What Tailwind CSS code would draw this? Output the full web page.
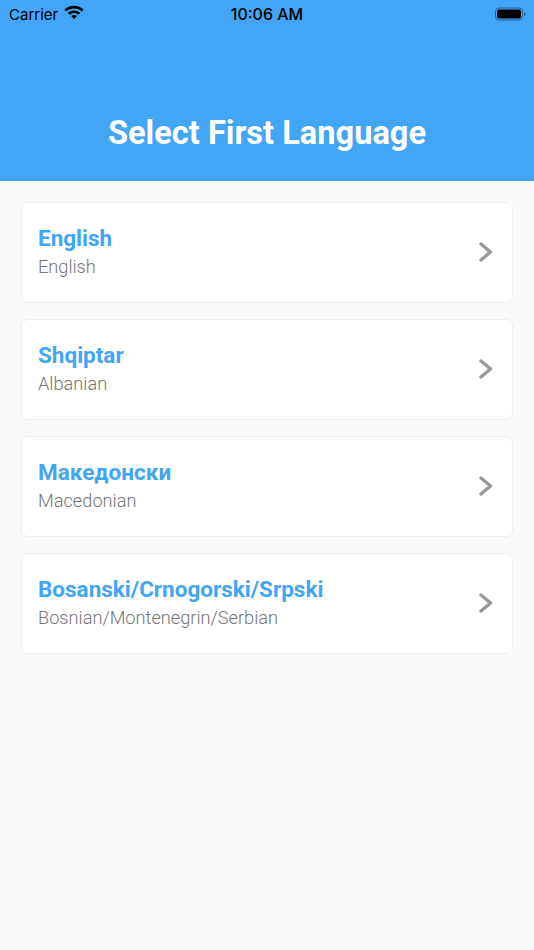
<!DOCTYPE html>
<html lang="en">

<head>
    <meta charset="UTF-8">
    <meta name="viewport" content="width=device-width, initial-scale=1.0">
    <title>Select First Language</title>
    <script src="https://cdn.jsdelivr.net/npm/@tailwindcss/browser@4"></script>
</head>

<body class="bg-[#fafafa] min-h-screen font-['Roboto',sans-serif]">

    <!-- Header -->
    <div class="bg-[#42a5f5] h-[181px] flex flex-col">
        <!-- Status bar -->
        <div class="h-[28px] pl-[9px] pr-[8px] flex items-center justify-between relative font-['Inter',sans-serif] text-black">
            <div class="flex items-center gap-[6px]">
                <span class="text-[15px] leading-none">Carrier</span>
                <svg class="w-[20px] h-[15px] -mt-[3px]" viewBox="0 0 19 14" fill="none">
                    <path d="M9.5 0.5C5.9 0.5 2.8 1.9 0.4 4.2L2.2 6C4.1 4.2 6.7 3.1 9.5 3.1C12.3 3.1 14.9 4.2 16.8 6L18.6 4.2C16.2 1.9 13.1 0.5 9.5 0.5Z" fill="black" />
                    <path d="M9.5 5C7.2 5 5.2 5.9 3.6 7.3L5.4 9.1C6.5 8.1 7.9 7.5 9.5 7.5C11.1 7.5 12.5 8.1 13.6 9.1L15.4 7.3C13.8 5.9 11.8 5 9.5 5Z" fill="black" />
                    <path d="M9.5 9.3C8.4 9.3 7.5 9.7 6.8 10.3L9.5 13.2L12.2 10.3C11.5 9.7 10.6 9.3 9.5 9.3Z" fill="black" />
                </svg>
            </div>
            <span class="absolute left-0 right-0 text-center text-[16px] font-medium leading-none">10:06 AM</span>
            <svg class="w-[31px] h-[14px]" viewBox="0 0 31 14" fill="none">
                <rect x="0.5" y="1" width="27" height="12" rx="3.5" stroke="#1f5f96" />
                <rect x="2" y="2.5" width="24" height="9" rx="2.2" fill="black" />
                <path d="M29 5V9C29.8 8.7 30.4 7.9 30.4 7C30.4 6.1 29.8 5.3 29 5Z" fill="#1f5f96" />
            </svg>
        </div>
        <div class="flex-1 flex items-end justify-center pb-[24px]">
            <h1 class="text-white text-[32.6px] leading-[48px] font-bold">Select First Language</h1>
        </div>
    </div>

    <!-- Language list -->
    <div class="px-[21px] pt-[21px] flex flex-col gap-[16px]">
        <div class="bg-white border border-[#eeeeee] rounded-[7px] h-[101px] pl-[16px] pr-[19px] flex items-center justify-between">
            <div class="-mt-[1px]">
                <div class="text-[#42a5f5] text-[22.5px] leading-[30px] font-bold">English</div>
                <div class="text-[#757575] text-[18.2px] leading-[28px] font-light">English</div>
            </div>
            <svg class="w-[14px] h-[20px] -mt-[2px]" viewBox="0 0 14 20" fill="none">
                <path d="M2 2L11.5 10L2 18" stroke="#999999" stroke-width="3.4" stroke-linecap="round" stroke-linejoin="round" />
            </svg>
        </div>
        <div class="bg-white border border-[#eeeeee] rounded-[7px] h-[101px] pl-[16px] pr-[19px] flex items-center justify-between">
            <div class="-mt-[1px]">
                <div class="text-[#42a5f5] text-[22.5px] leading-[30px] font-bold">Shqiptar</div>
                <div class="text-[#757575] text-[18.2px] leading-[28px] font-light">Albanian</div>
            </div>
            <svg class="w-[14px] h-[20px] -mt-[2px]" viewBox="0 0 14 20" fill="none">
                <path d="M2 2L11.5 10L2 18" stroke="#999999" stroke-width="3.4" stroke-linecap="round" stroke-linejoin="round" />
            </svg>
        </div>
        <div class="bg-white border border-[#eeeeee] rounded-[7px] h-[101px] pl-[16px] pr-[19px] flex items-center justify-between">
            <div class="-mt-[1px]">
                <div class="text-[#42a5f5] text-[22.5px] leading-[30px] font-bold">Македонски</div>
                <div class="text-[#757575] text-[18.2px] leading-[28px] font-light">Macedonian</div>
            </div>
            <svg class="w-[14px] h-[20px] -mt-[2px]" viewBox="0 0 14 20" fill="none">
                <path d="M2 2L11.5 10L2 18" stroke="#999999" stroke-width="3.4" stroke-linecap="round" stroke-linejoin="round" />
            </svg>
        </div>
        <div class="bg-white border border-[#eeeeee] rounded-[7px] h-[101px] pl-[16px] pr-[19px] flex items-center justify-between">
            <div class="-mt-[1px]">
                <div class="text-[#42a5f5] text-[22.5px] leading-[30px] font-bold">Bosanski/Crnogorski/Srpski</div>
                <div class="text-[#757575] text-[18.2px] leading-[28px] font-light">Bosnian/Montenegrin/Serbian</div>
            </div>
            <svg class="w-[14px] h-[20px] -mt-[2px]" viewBox="0 0 14 20" fill="none">
                <path d="M2 2L11.5 10L2 18" stroke="#999999" stroke-width="3.4" stroke-linecap="round" stroke-linejoin="round" />
            </svg>
        </div>
    </div>

</body>

</html>
